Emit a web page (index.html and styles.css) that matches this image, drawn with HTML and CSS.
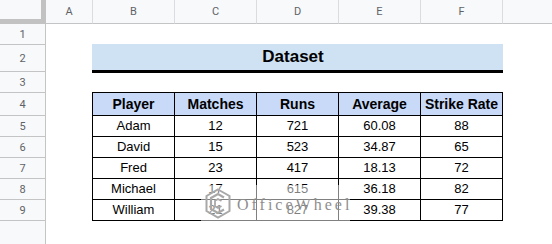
FILE: index.html
```html
<!DOCTYPE html>
<html>
<head>
<meta charset="utf-8">
<link rel="stylesheet" href="styles.css">
</head>
<body>
<div class="sheet">
  <div class="colhead">
    <div class="corner"></div>
    <div class="ch cola">A</div>
    <div class="ch">B</div>
    <div class="ch">C</div>
    <div class="ch">D</div>
    <div class="ch">E</div>
    <div class="ch">F</div>
    <div class="ch rest"></div>
  </div>
  <div class="body">
    <div class="rowhead">
      <div class="rh">1</div>
      <div class="rh r2">2</div>
      <div class="rh">3</div>
      <div class="rh r4">4</div>
      <div class="rh">5</div>
      <div class="rh">6</div>
      <div class="rh">7</div>
      <div class="rh">8</div>
      <div class="rh">9</div>
    </div>
    <div class="content">
      <div class="band">Dataset</div>
      <div class="table">
        <div class="th">Player</div><div class="th">Matches</div><div class="th">Runs</div><div class="th">Average</div><div class="th">Strike Rate</div>
        <div class="td">Adam</div><div class="td">12</div><div class="td">721</div><div class="td">60.08</div><div class="td">88</div>
        <div class="td">David</div><div class="td">15</div><div class="td">523</div><div class="td">34.87</div><div class="td">65</div>
        <div class="td">Fred</div><div class="td">23</div><div class="td">417</div><div class="td">18.13</div><div class="td">72</div>
        <div class="td">Michael</div><div class="td">17</div><div class="td">615</div><div class="td">36.18</div><div class="td">82</div>
        <div class="td">William</div><div class="td">21</div><div class="td">827</div><div class="td">39.38</div><div class="td">77</div>
      </div>
    </div>
  </div>
  <div class="watermark">
    <svg class="wm-logo" width="26" height="31" viewBox="0 0 26 31">
      <polygon points="13,1.5 24.5,8 24.5,23 13,29.5 1.5,23 1.5,8" fill="none" stroke="#a8a8a8" stroke-width="2"/>
      <polyline points="19,9.5 13,6 6,10 6,21 13,25 19,21.5" fill="none" stroke="#a8a8a8" stroke-width="2.2"/>
      <polyline points="16.5,13 13,11 10,12.8 10,18.2 13,20 16.5,18" fill="none" stroke="#a8a8a8" stroke-width="1.8"/>
    </svg>
    <span class="wm-text">OfficeWheel</span>
  </div>
</div>
</body>
</html>
```
FILE: styles.css
```css
html, body {
  margin: 0;
  padding: 0;
  background: #ffffff;
}
.sheet {
  position: relative;
  width: 552px;
  height: 244px;
  overflow: hidden;
  font-family: "Liberation Sans", Arial, sans-serif;
  color: #000;
}
.colhead {
  display: flex;
  height: 24px;
  background: #f8f9fa;
}
.corner {
  box-sizing: border-box;
  width: 46px;
  height: 24px;
  background: #f8f9fa;
  border-right: 5px solid #c2c2c2;
  border-bottom: 5px solid #c2c2c2;
}
.ch {
  box-sizing: border-box;
  width: 82px;
  height: 24px;
  border-right: 1px solid #dadce0;
  border-bottom: 1px solid #c4c4c4;
  display: flex;
  align-items: center;
  justify-content: center;
  font-family: Roboto, "Liberation Sans", Arial, sans-serif;
  font-size: 11px;
  color: #5f6368;
}
.ch.cola {
  width: 47px;
}
.ch.rest {
  flex: 1;
  border-right: none;
}
.body {
  display: flex;
  height: 220px;
}
.rowhead {
  box-sizing: border-box;
  width: 46px;
  height: 220px;
  background: #f8f9fa;
  border-right: 1px solid #c4c4c4;
  display: flex;
  flex-direction: column;
}
.rh {
  box-sizing: border-box;
  height: 21px;
  border-bottom: 1px solid #c4c4c4;
  display: flex;
  align-items: center;
  justify-content: center;
  font-family: Roboto, "Liberation Sans", Arial, sans-serif;
  font-size: 11px;
  color: #5f6368;
}
.rh.r2 {
  height: 27px;
}
.rh.r4 {
  height: 23px;
}
.content {
  padding-left: 46px;
  padding-top: 20px;
}
.band {
  box-sizing: border-box;
  width: 411px;
  height: 29px;
  background: #cfe2f3;
  border-bottom: 3px solid #000;
  font-weight: bold;
  font-size: 17px;
  line-height: 26px;
  text-align: center;
  padding-right: 9px;
}
.table {
  margin-top: 19px;
  display: grid;
  grid-template-columns: repeat(5, 82px);
  width: 411px;
  box-sizing: border-box;
  border-left: 1px solid #000;
  border-top: 1px solid #000;
}
.th, .td {
  box-sizing: border-box;
  border-right: 1px solid #000;
  border-bottom: 1px solid #000;
  text-align: center;
  white-space: nowrap;
}
.th {
  height: 23px;
  line-height: 22px;
  background: #c9daf8;
  font-weight: bold;
  font-size: 14px;
}
.td {
  height: 21px;
  line-height: 20px;
  font-size: 13px;
}
.watermark {
  position: absolute;
  left: 201px;
  top: 185px;
  width: 149px;
  height: 36px;
  background: rgba(255, 255, 255, 0.5);
  display: flex;
  align-items: center;
  gap: 6px;
  padding-left: 4px;
  box-sizing: border-box;
}
.wm-logo {
  flex: none;
}
.wm-text {
  font-family: "Liberation Serif", "Times New Roman", serif;
  font-size: 16px;
  letter-spacing: 3px;
  color: #8e8e8e;
  margin-top: 3px;
}
```
